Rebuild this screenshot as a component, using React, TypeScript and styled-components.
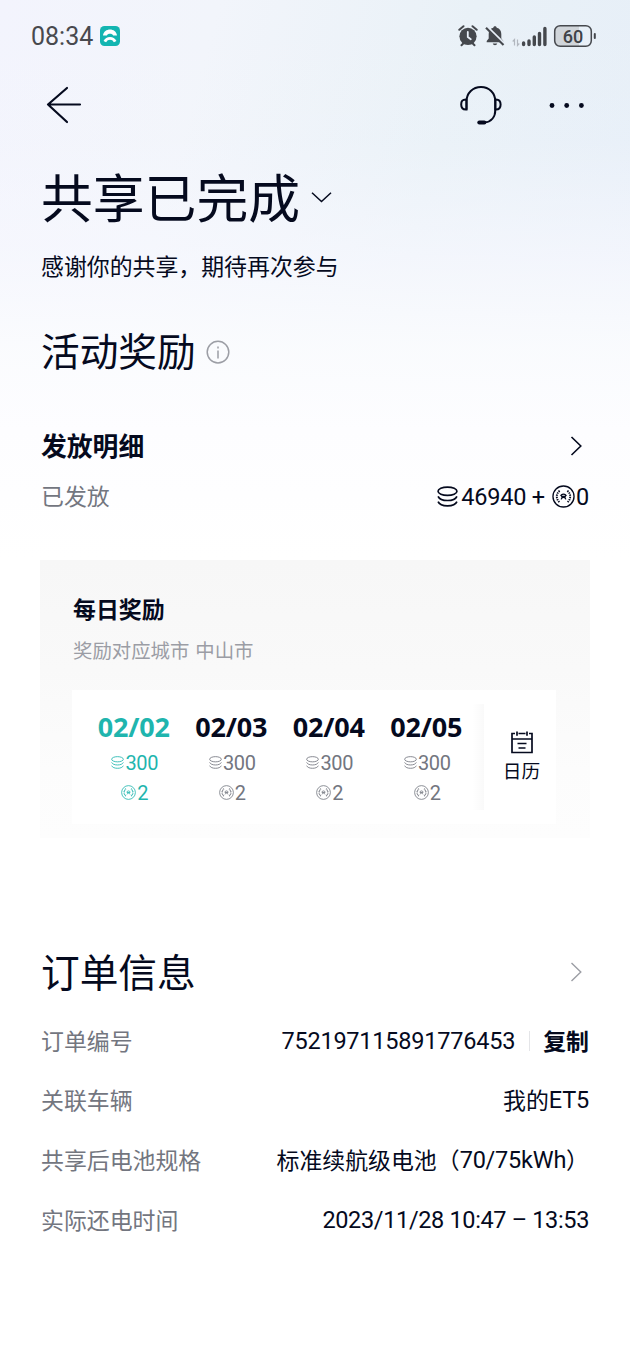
import React from "react";
import styled, { createGlobalStyle } from "styled-components";

const ink = "#050a1e";
const grey = "#73767f";
const teal = "#1fb5ae";
const hanFont = `Lato, "Noto Sans CJK SC", sans-serif`;
const numberFont = `Roboto, "Noto Sans CJK SC", sans-serif`;

const GlobalStyle = createGlobalStyle`
  * { box-sizing: border-box; }
  body { margin: 0; background: #fff; }
`;

const Screen = styled.main`
  width: 630px;
  height: 1360px;
  overflow: hidden;
  color: ${ink};
  font-family: ${hanFont};
  background:
    linear-gradient(180deg, rgba(248, 249, 255, 0) 0, rgba(248, 249, 255, 0.1) 140px, rgba(247, 248, 254, 0.75) 260px, rgba(251, 252, 254, 0.92) 350px, #fdfdff 430px, #fff 560px),
    linear-gradient(105deg, #f3f4fd 0, #f2f5fb 22%, #e9f1f7 48%, #e6eef8 75%, #e5edf5 100%);
`;

const StatusBar = styled.header`
  display: flex;
  align-items: center;
  justify-content: space-between;
  height: 72px;
  padding: 0 32px 0 31px;
`;

const Cluster = styled.div<{ $gap?: number }>`
  display: flex;
  align-items: center;
  gap: ${(p) => p.$gap ?? 0}px;
`;

const Clock = styled.span`
  width: 63px;
  padding-top: 2px;
  font: 400 25px/30px Roboto, sans-serif;
  color: #48494e;
`;

const NavBar = styled.nav`
  display: flex;
  align-items: center;
  justify-content: space-between;
  height: 66px;
  padding: 0 45px 0 46px;
`;

const Hero = styled.section`
  padding: 26px 41px 0;
`;

const TitleRow = styled.div`
  display: flex;
  align-items: center;
  gap: 11px;
  height: 68px;
`;

const Title = styled.h1`
  margin: 0;
  font-size: 51.8px;
  line-height: 68px;
  font-weight: 400;
`;

const Subtitle = styled.p`
  margin: 17px 0 0;
  font-size: 22.9px;
  line-height: 34px;
`;

const Section = styled.section<{ $top: number }>`
  padding: 0 41px;
  margin-top: ${(p) => p.$top}px;
`;

const SectionHead = styled.div`
  display: flex;
  align-items: center;
  height: 56px;
  gap: 10px;
`;

const SectionTitle = styled.h2`
  margin: 0;
  font-size: 38.7px;
  line-height: 56px;
  font-weight: 400;
`;

const Row = styled.div<{ $height: number; $top?: number }>`
  display: flex;
  align-items: center;
  justify-content: space-between;
  height: ${(p) => p.$height}px;
  margin-top: ${(p) => p.$top ?? 0}px;
`;

const RowTitle = styled.h3`
  margin: 0;
  font-size: 25.8px;
  line-height: 38px;
  font-weight: 700;
`;

const Label = styled.span`
  font-size: 22.9px;
  line-height: 34px;
  color: ${grey};
`;

const Value = styled.span<{ $spacing?: number }>`
  display: flex;
  align-items: center;
  font-family: ${numberFont};
  font-size: 23.5px;
  line-height: 34px;
  letter-spacing: ${(p) => p.$spacing ?? -0.22}px;
  white-space: pre;
`;

const Amount = styled.span<{ $after?: number; $before?: number }>`
  margin: 0 ${(p) => p.$after ?? 0}px 0 ${(p) => p.$before ?? 0}px;
  padding-top: 2px;
`;

const Han = styled.span`
  font-family: ${hanFont};
  font-size: 22.9px;
  letter-spacing: 0;
`;

const Card = styled.div`
  height: 278px;
  margin: 47px -1px 0;
  padding: 32px 34px 0 32px;
  background: linear-gradient(180deg, #f7f7f7 0, #f9f9f9 40%, #fcfcfc 75%, #fdfdfd 100%);
`;

const CardTitle = styled.h3`
  margin: 0;
  padding-left: 1px;
  font-size: 22.9px;
  line-height: 34px;
  font-weight: 700;
`;

const CardNote = styled.p`
  margin: 10px 0 0;
  padding-left: 1px;
  font-size: 19.4px;
  line-height: 30px;
  word-spacing: 1px;
  color: #9b9da5;
`;

const Days = styled.div`
  display: flex;
  height: 134px;
  margin-top: 24px;
  background: #fff;
`;

const DayList = styled.div`
  display: flex;
  width: 412px;
  padding: 20px 0 0 13px;
`;

const Day = styled.div<{ $active?: boolean }>`
  display: flex;
  flex: 0 0 97.5px;
  flex-direction: column;
  align-items: center;
  color: ${(p) => (p.$active ? teal : grey)};
`;

const DayDate = styled.strong<{ $active?: boolean }>`
  margin-bottom: 3px;
  font: 700 27px/34px "Noto Sans", sans-serif;
  letter-spacing: -0.2px;
  color: ${(p) => (p.$active ? teal : ink)};
`;

const Reward = styled.span`
  display: flex;
  align-items: center;
  gap: 1px;
  height: 30px;
  padding: 1px 0 0 2px;
  font-family: ${numberFont};
  font-size: 20px;
  letter-spacing: -0.4px;
`;

const Divider = styled.div`
  width: 12px;
  margin: 14px 0 14px -12px;
  background: linear-gradient(90deg, rgba(0, 0, 0, 0), rgba(0, 0, 0, 0.022));
`;

const Calendar = styled.div`
  display: flex;
  flex: 1;
  flex-direction: column;
  align-items: center;
  padding: 41px 0 0 3px;
  font-size: 18.7px;
  line-height: 28px;
  gap: 2px;
`;

const Separator = styled.i`
  width: 1px;
  height: 20px;
  margin: 0 13px 0 14px;
  background: #e4e5e8;
`;

const Copy = styled.b`
  font-family: ${hanFont};
  font-size: 22.9px;
  letter-spacing: 0;
`;

const Chevron = ({ color, width = 1.6 }: { color: string; width?: number }) => (
  <svg width="28" height="22" viewBox="0 0 28 22" fill="none" stroke={color} strokeWidth={width}>
    <path d="M10.500 2l9.300 9-9.300 9" />
  </svg>
);

const Coins = ({ size, width = 1.6 }: { size: number; width?: number }) => (
  <svg width={size} height={size} viewBox="0 0 20 20" fill="none" stroke="currentColor" strokeWidth={width}>
    <ellipse cx="10" cy="5" rx="9" ry="4" />
    <path d="M1 9.800c1.200 2.700 4.600 4 9 4s7.800-1.300 9-4M1 14.900c1.200 2.700 4.600 4 9 4s7.800-1.300 9-4" />
  </svg>
);

const Medal = ({ size, width = 1.4 }: { size: number; width?: number }) => (
  <svg width={size} height={size} viewBox="0 0 24 24" fill="none" stroke="currentColor" strokeWidth={width}>
    <circle cx="12" cy="12" r="11" />
    <path d="M8 6C4 9 4 15 8 18M16 6c4 3 4 9 0 12" strokeDasharray="1.500 .9" strokeWidth="2" />
    <path d="M9.200 11.700c.4-3 5.200-3 5.600 0M9.600 15c.7-2.700 4.100-2.700 4.800 0M9.500 12h5" />
  </svg>
);

const AppLogo = () => (
  <svg width="20" height="20" viewBox="0 0 20 20">
    <rect width="20" height="20" rx="4.500" fill="#13b5b1" />
    <path d="M3 9.600C4 1.600 16 1.600 17 9.600h-3.800c-.8-2.600-5.600-2.600-6.400 0z" fill="#fff" />
    <path d="M4.800 15.600c1.200-2.200 2.400-3.200 5.200-3.200s4 1 5.200 3.200" fill="none" stroke="#fff" strokeWidth="2.900" />
  </svg>
);

const StatusIcons = () => (
  <svg width="140" height="24" viewBox="0 0 140 24" fill="none">
    <g stroke="#45484d" strokeWidth="2" strokeLinecap="round">
      <path d="M1.300 5.800l4.200-3.600M18.700 5.800l-4.200-3.600M3.500 21.300l2.500-2.500M16.500 21.300L14 18.800" />
      <circle cx="10" cy="12.300" r="8.600" fill="#45484d" stroke="none" />
      <path d="M9.800 8v5l3 2.300" stroke="#e8eff8" strokeWidth="1.800" />
    </g>
    <path d="M37 2.200c1 0 1.700.7 1.700 1.600 3 .8 4.600 3 4.600 6.200v4.500l2 2.500v1.200H28.700V17l2-2.500V10c0-3.200 1.600-5.400 4.600-6.200 0-.9.7-1.600 1.700-1.600zM34.800 19.500h4.400c-.4 2.300-4 2.300-4.400 0z" fill="#45484d" />
    <path d="M29.300 2.800l17 16.800" stroke="#e8eff8" strokeWidth="2.200" />
    <path d="M28 3.800l17.500 17.300" stroke="#45484d" strokeWidth="2.100" />
    <path d="M56.500 21.500v-6l-1.800 2M59.500 15.500v6l1.800-2" stroke="#b2b7bf" strokeWidth="1.200" />
    <g stroke="#45484d" strokeWidth="3.400" strokeLinecap="round">
      <path d="M65.600 19v1.500M71 17v3.500M76.300 13v7.500M81.500 9.500v11M86.900 4.500v16" />
    </g>
    <path d="M101 2h20v20h-20a5 5 0 0 1-5-5V7a5 5 0 0 1 5-5z" fill="#d0d5da" />
    <rect x="96.700" y="1.700" width="36.600" height="20.600" rx="5.500" stroke="#45484d" strokeWidth="1.500" />
    <path d="M136.800 10v4" stroke="#45484d" strokeWidth="2" strokeLinecap="round" />
    <text x="115" y="18.700" textAnchor="middle" fontFamily="Roboto" fontWeight="500" fontSize="18" fill="#3f4247">60</text>
  </svg>
);

const days = ["02/02", "02/03", "02/04", "02/05"];

export default function App() {
  return (
    <Screen>
      <GlobalStyle />
      <StatusBar>
        <Cluster $gap={6}>
          <Clock>08:34</Clock>
          <AppLogo />
        </Cluster>
        <StatusIcons />
      </StatusBar>
      <NavBar>
        <svg width="36" height="38" viewBox="0 0 36 38" fill="none" stroke={ink} strokeWidth="2.200" strokeLinecap="round" strokeLinejoin="round">
          <path d="M21 2L2 18.500l19 17.500M2 18.500h32" />
        </svg>
        <Cluster $gap={47}>
          <svg width="42" height="40" viewBox="0 0 42 40" fill="none" stroke={ink} strokeWidth="2" strokeLinecap="round">
            <path d="M6.500 24V16.500C6.500 8 13 2 21 2s14.300 6 14.300 14.500V25c0 7-4 12-11 12.500" />
            <path d="M6.500 14.500h-.7c-3.200 0-4.600 1.500-4.600 5s1.400 5 4.600 5h.7zM35.300 14.500h.7c3.200 0 4.600 1.500 4.600 5s-1.400 5-4.600 5h-.7z" />
            <path d="M19.300 37.500h5" strokeWidth="4" />
          </svg>
          <svg width="36" height="6" viewBox="0 0 36 6" fill={ink}>
            <circle cx="3" cy="3.500" r="2.400" />
            <circle cx="17.700" cy="3.500" r="2.400" />
            <circle cx="32.400" cy="3.500" r="2.400" />
          </svg>
        </Cluster>
      </NavBar>

      <Hero>
        <TitleRow>
          <Title>共享已完成</Title>
          <svg width="21" height="12" viewBox="0 0 21 12" fill="none" stroke={ink} strokeWidth="1.500">
            <path d="M1 .8l9.500 8.800L20 .8" />
          </svg>
        </TitleRow>
        <Subtitle>感谢你的共享，期待再次参与</Subtitle>
      </Hero>

      <Section $top={40}>
        <SectionHead>
          <SectionTitle>活动奖励</SectionTitle>
          <svg width="24" height="26" viewBox="0 0 24 26" fill="none" stroke="#9c9ea5" strokeWidth="1.500">
            <circle cx="12" cy="14.100" r="10.800" />
            <path d="M12 12.500v8M12 8.500v2" />
          </svg>
        </SectionHead>
        <Row $height={38} $top={48}>
          <RowTitle>发放明细</RowTitle>
          <Chevron color={ink} />
        </Row>
        <Row $height={34} $top={14}>
          <Label>已发放</Label>
          <Value>
            <Coins size={21} />
            <Amount $before={3} $after={7}>46940 +</Amount>
            <Medal size={23} />
            <Amount $before={1}>0</Amount>
          </Value>
        </Row>
        <Card>
          <CardTitle>每日奖励</CardTitle>
          <CardNote>奖励对应城市 中山市</CardNote>
          <Days>
            <DayList>
              {days.map((day, i) => (
                <Day key={day} $active={i === 0}>
                  <DayDate $active={i === 0}>{day}</DayDate>
                  <Reward>
                    <Coins size={13} width={1.3} />
                    300
                  </Reward>
                  <Reward>
                    <Medal size={15} width={1.3} />2
                  </Reward>
                </Day>
              ))}
            </DayList>
            <Divider />
            <Calendar>
              <svg width="24" height="24" viewBox="0 0 24 24" fill="none" stroke={ink} strokeWidth="1.700">
                <path d="M5 2.500H2v19h20v-19h-3M8.500 2.500h7M2 8h20M7 .5v4.200M17 .5v4.200M7.500 12.500h9M8.500 17h7" />
              </svg>
              日历
            </Calendar>
          </Days>
        </Card>
      </Section>

      <Section $top={106}>
        <Row $height={56}>
          <SectionTitle>订单信息</SectionTitle>
          <Chevron color="#9c9ea5" width={1.4} />
        </Row>
        <Row $height={59.6} $top={11}>
          <Label>订单编号</Label>
          <Value>
            752197115891776453
            <Separator />
            <Copy>复制</Copy>
          </Value>
        </Row>
        <Row $height={59.6}>
          <Label>关联车辆</Label>
          <Value>
            <Han>我的</Han>ET5
          </Value>
        </Row>
        <Row $height={59.6}>
          <Label>共享后电池规格</Label>
          <Value>
            <Han>标准续航级电池（</Han>70/75kWh<Han>）</Han>
          </Value>
        </Row>
        <Row $height={59.6}>
          <Label>实际还电时间</Label>
          <Value $spacing={-0.35}>2023/11/28 10:47 – 13:53</Value>
        </Row>
      </Section>
    </Screen>
  );
}
